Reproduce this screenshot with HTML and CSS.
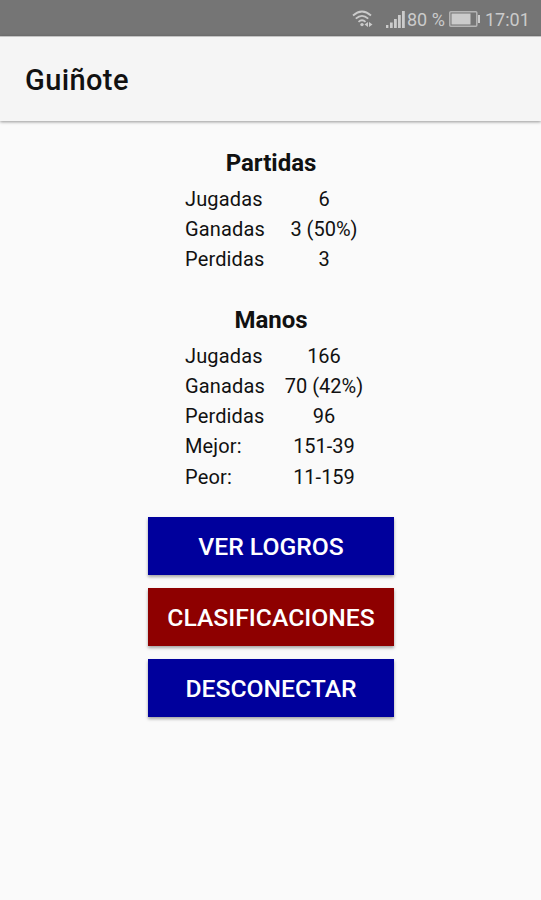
FILE: index.html
```html
<!DOCTYPE html>
<html lang="es">
<head>
<meta charset="utf-8">
<title>Guiñote</title>
<link rel="stylesheet" href="styles.css">
</head>
<body>
<div class="status">
  <svg class="wifi" width="22" height="18" viewBox="0 0 22 18" fill="none" stroke="currentColor" stroke-width="1.8">
    <path d="M1 5.5Q10 -2.5 19 5.5M3.8 8.7Q10 3 16.2 8.7M6.5 11.8Q10 8.7 13.5 11.8"/>
    <circle cx="10" cy="14.6" r="1.7" fill="currentColor" stroke="none"/>
    <path d="M12.5 14.5l3.5-2.6v5.2zM20.5 14.5l-3.5-2.6v5.2z" fill="currentColor" stroke="none"/>
  </svg>
  <svg class="signal" width="19" height="17" viewBox="0 0 19 17" fill="currentColor">
    <path d="M0 14h2.4v3H0zM4 11.5h2.7V17H4zM8 8h2.8v9H8zM12 4h2.8v13H12zM16 0h2.8v17H16z"/>
  </svg>
  <span class="percent">80 %</span>
  <svg class="battery" width="32" height="16" viewBox="0 0 32 16">
    <rect x=".8" y=".8" width="27" height="14.4" rx="1" fill="none" stroke="currentColor" stroke-opacity=".75" stroke-width="1.5"/>
    <rect x="2.5" y="2.5" width="19" height="11" fill="currentColor"/>
    <path d="M29 4h2v8h-2z" fill="currentColor"/>
  </svg>
  <span class="clock">17:01</span>
</div>
<header class="bar"><h1>Guiñote</h1></header>
<main>
  <section>
    <h2>Partidas</h2>
    <dl>
      <dt>Jugadas</dt><dd>6</dd>
      <dt>Ganadas</dt><dd>3 (50%)</dd>
      <dt>Perdidas</dt><dd>3</dd>
    </dl>
  </section>
  <section>
    <h2>Manos</h2>
    <dl>
      <dt>Jugadas</dt><dd>166</dd>
      <dt>Ganadas</dt><dd>70 (42%)</dd>
      <dt>Perdidas</dt><dd>96</dd>
      <dt>Mejor:</dt><dd>151-39</dd>
      <dt>Peor:</dt><dd>11-159</dd>
    </dl>
  </section>
  <div class="actions">
    <button class="blue">VER LOGROS</button>
    <button class="red">CLASIFICACIONES</button>
    <button class="blue">DESCONECTAR</button>
  </div>
</main>
</body>
</html>
```

FILE: styles.css
```css
* { box-sizing: border-box; margin: 0; padding: 0; }
body {
  min-height: 900px;
  background: #fafafa;
  color: #111;
  font-family: Roboto, "Liberation Sans", sans-serif;
}
.status {
  height: 36px;
  padding: 2px 13px 0 0;
  display: flex;
  align-items: center;
  justify-content: flex-end;
  background: #757575;
  color: #cbcbcb;
  font-size: 18px;
  white-space: nowrap;
}
.wifi { margin-right: 12px; }
.signal { margin-right: 2px; }
.percent { width: 38px; margin-right: 4px; }
.battery { margin-right: 4px; }
.clock { width: 43px; }
.bar {
  height: 85px;
  padding: 2px 25px 0;
  display: flex;
  align-items: center;
  background: #f5f5f5;
  border-top: 1px solid #c4c4c4;
  box-shadow: 0 1px 3px rgba(0, 0, 0, .4);
}
h1 { font-size: 29px; font-weight: 500; letter-spacing: .4px; }
main {
  padding-top: 27px;
  display: flex;
  flex-direction: column;
  align-items: center;
}
section { width: 190px; margin-bottom: 30.3px; }
h2 {
  height: 36px;
  padding-left: 1px;
  line-height: 31px;
  font-size: 24px;
  font-weight: 700;
  text-align: center;
}
dl {
  padding-left: 9.5px;
  display: grid;
  grid-template-columns: 99px 80px;
  grid-auto-rows: 30.2px;
  line-height: 30px;
  font-size: 20px;
}
dt { letter-spacing: .15px; }
dd { text-align: center; white-space: nowrap; }
.actions {
  width: 246px;
  margin-top: -5.6px;
  display: grid;
  gap: 12.5px;
}
button {
  height: 58.5px;
  padding: 2px 0 0 1px;
  border: 0;
  color: #fff;
  font: 500 24.7px Roboto, "Liberation Sans", sans-serif;
  box-shadow: 0 2px 3px rgba(0, 0, 0, .35);
}
.blue { background: #00009c; }
.red { background: #8e0000; }
```
